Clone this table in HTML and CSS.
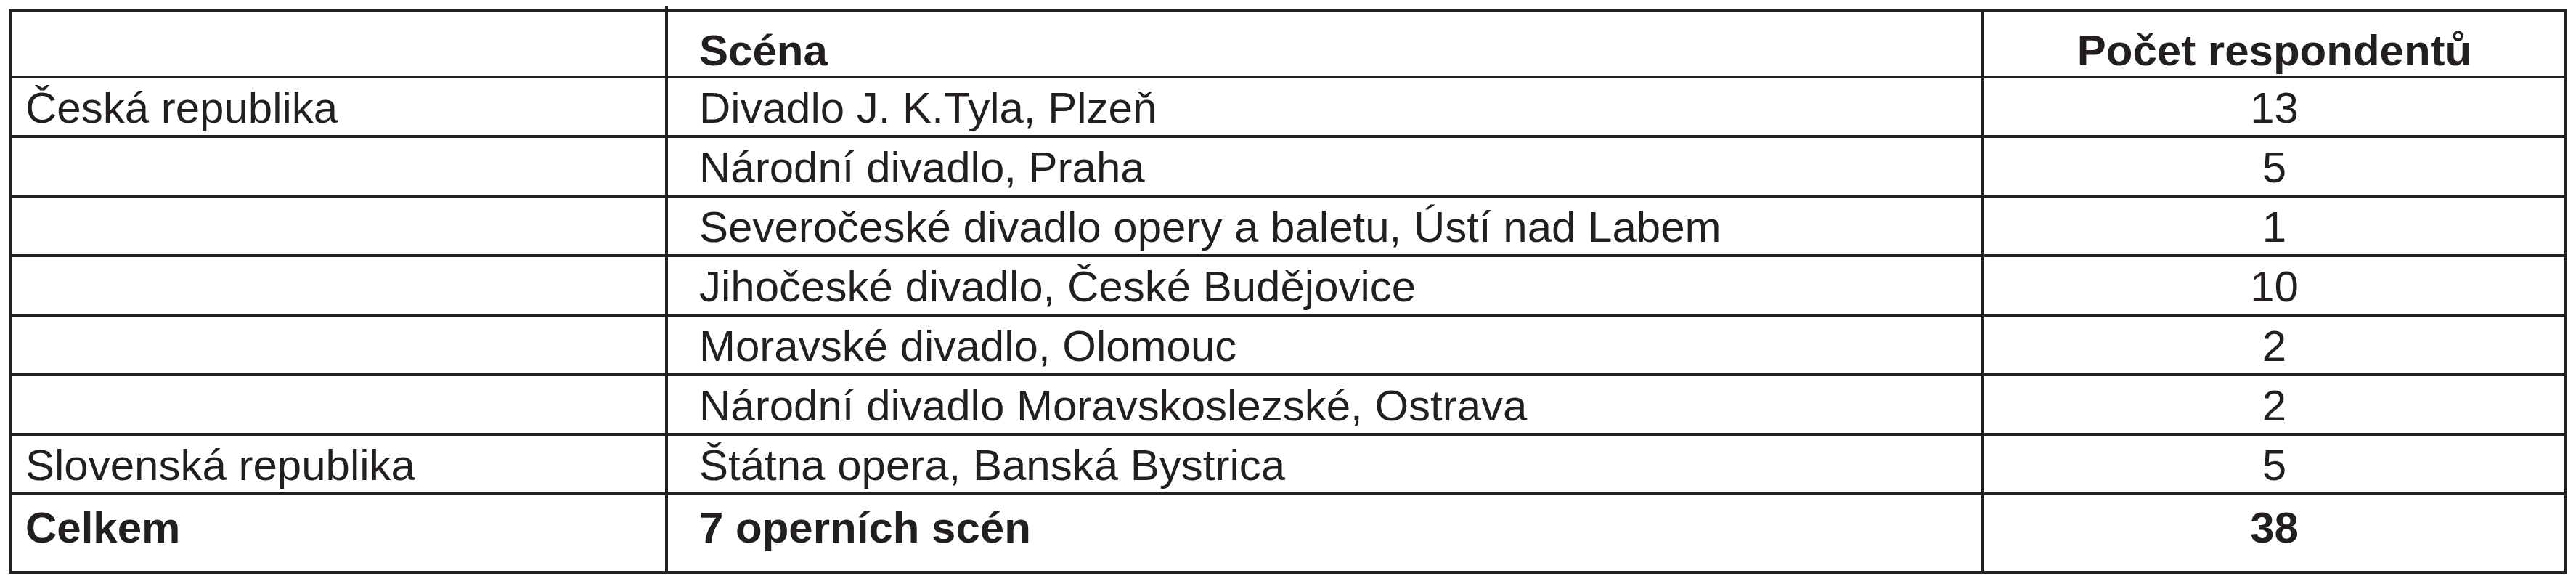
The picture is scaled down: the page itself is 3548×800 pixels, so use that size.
FILE: index.html
```html
<!DOCTYPE html>
<html lang="cs">
<head>
<meta charset="utf-8">
<title>Operní scény</title>
<link rel="stylesheet" href="styles.css">
</head>
<body>
<table class="data">
  <colgroup>
    <col class="c-country">
    <col class="c-scene">
    <col class="c-count">
  </colgroup>
  <thead>
    <tr class="head">
      <th class="country"></th>
      <th class="scene tick">Scéna</th>
      <th class="count">Počet respondentů</th>
    </tr>
  </thead>
  <tbody>
    <tr><td class="country">Česká republika</td><td class="scene">Divadlo J. K.Tyla, Plzeň</td><td class="count">13</td></tr>
    <tr><td class="country"></td><td class="scene">Národní divadlo, Praha</td><td class="count">5</td></tr>
    <tr><td class="country"></td><td class="scene">Severočeské divadlo opery a baletu, Ústí nad Labem</td><td class="count">1</td></tr>
    <tr><td class="country"></td><td class="scene">Jihočeské divadlo, České Budějovice</td><td class="count">10</td></tr>
    <tr><td class="country"></td><td class="scene">Moravské divadlo, Olomouc</td><td class="count">2</td></tr>
    <tr><td class="country"></td><td class="scene">Národní divadlo Moravskoslezské, Ostrava</td><td class="count">2</td></tr>
    <tr><td class="country">Slovenská republika</td><td class="scene">Štátna opera, Banská Bystrica</td><td class="count">5</td></tr>
    <tr class="total"><td class="country">Celkem</td><td class="scene">7 operních scén</td><td class="count">38</td></tr>
  </tbody>
</table>
</body>
</html>
```

FILE: styles.css
```css
html, body {
  margin: 0;
  padding: 0;
  background: #ffffff;
}

body {
  font-family: "Liberation Sans", Arial, sans-serif;
  color: #231f20;
}

.data {
  margin: 12px 0 0 12px;
  width: 3524px;
  border-collapse: separate;
  border-spacing: 0;
  border-top: 4px solid #231f20;
  border-left: 4px solid #231f20;
  table-layout: fixed;
  font-size: 60px;
}

.c-country { width: 904px; }
.c-scene { width: 1813px; }
.c-count { width: 803px; }

.data th,
.data td {
  border-right: 4px solid #231f20;
  border-bottom: 4px solid #231f20;
  padding: 0;
  white-space: nowrap;
  vertical-align: middle;
  line-height: 69px;
}

.data td {
  padding-top: 2px;
}

.data th {
  font-weight: bold;
  vertical-align: bottom;
  text-align: left;
}

.head { height: 92px; }
.data tbody tr { height: 82px; }
.data tbody tr.total { height: 108px; }

.data .country { padding-left: 19px; text-align: left; }
.data .scene { padding-left: 43px; text-align: left; }
.data .count { text-align: center; }

.data .total td {
  font-weight: bold;
  vertical-align: top;
  padding-top: 10px;
}

.tick { position: relative; }
.tick::before {
  content: "";
  position: absolute;
  left: -4px;
  top: -8px;
  width: 4px;
  height: 4px;
  background: #231f20;
}
```
